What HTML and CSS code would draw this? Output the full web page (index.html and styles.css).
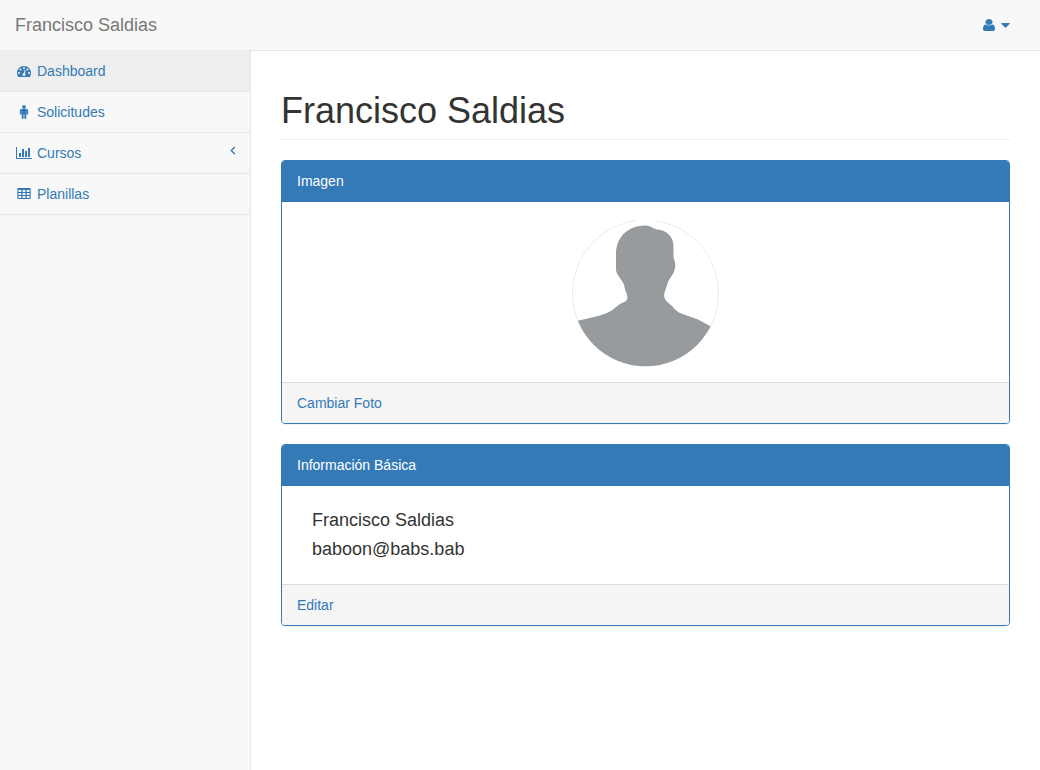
FILE: index.html
```html
<!DOCTYPE html>
<html lang="es">
<head>
<meta charset="utf-8">
<title>Francisco Saldias</title>
<link rel="stylesheet" href="styles.css">
</head>
<body>
<header class="navbar">
  <a class="brand">Francisco Saldias</a>
  <a class="user-menu">
    <svg class="user-icon" viewBox="256 128 1280 1536" preserveAspectRatio="none"><path d="M1536 1399q0 109-62.5 187t-150.5 78h-854q-88 0-150.5-78t-62.5-187q0-85 8.5-160.5t31.5-152 58.5-131 94-89 134.5-34.5q131 128 313 128t313-128q76 0 134.5 34.5t94 89 58.5 131 31.5 152 8.5 160.5zm-256-887q0 159-112.5 271.5t-271.5 112.5-271.5-112.5-112.5-271.5 112.5-271.5 271.5-112.5 271.5 112.5 112.5 271.5z"/></svg>
    <svg class="caret" viewBox="0 0 9 5"><path d="M.8 0h7.400q.8 0 .5.700L5 4.500q-.5.500-1 0L.3.700Q0 0 .8 0z"/></svg>
  </a>
</header>
<div class="layout">
  <nav class="sidebar">
    <a class="item active">
      <svg class="icon" viewBox="-128 0 2048 1792"><path d="M384 1152q0-53-37.5-90.5t-90.5-37.5-90.5 37.5-37.5 90.5 37.5 90.5 90.5 37.5 90.5-37.5 37.5-90.5zm192-448q0-53-37.5-90.5t-90.5-37.5-90.5 37.5-37.5 90.5 37.5 90.5 90.5 37.5 90.5-37.5 37.5-90.5zm428 481l101-382q6-26-7.5-48.5t-38.5-29.5-48 6.5-30 39.5l-101 382q-60 5-107 43.5t-63 98.5q-20 77 20 146t117 89 146-20 89-117q16-60-6-117t-72-91zm660-33q0-53-37.5-90.5t-90.5-37.5-90.5 37.5-37.5 90.5 37.5 90.5 90.5 37.5 90.5-37.5 37.5-90.5zm-640-640q0-53-37.5-90.5t-90.5-37.5-90.5 37.5-37.5 90.5 37.5 90.5 90.5 37.5 90.5-37.5 37.5-90.5zm448 192q0-53-37.5-90.5t-90.5-37.5-90.5 37.5-37.5 90.5 37.5 90.5 90.5 37.5 90.5-37.5 37.5-90.5zm320 448q0 261-141 483-19 29-54 29h-1402q-35 0-54-29-141-221-141-483 0-182 71-348t191-286 286-191 348-71 348 71 286 191 191 286 71 348z"/></svg>
      <span>Dashboard</span>
    </a>
    <a class="item">
      <svg class="icon" viewBox="0 0 16 14"><circle cx="8" cy="1.900" r="1.900"/><path d="M5.500 4h5Q12.200 4 12.200 5.700V8.700a.85.85 0 0 1-1.700 0V6h-.2v7.100a.9.9 0 0 1-1.900 0V9.500h-.8v3.600a.9.9 0 0 1-1.900 0V6H5.500v2.700a.85.85 0 0 1-1.700 0V5.700Q3.800 4 5.500 4z"/></svg>
      <span>Solicitudes</span>
    </a>
    <a class="item">
      <svg class="icon" viewBox="0 0 2048 1792"><path d="M640 896v512h-256v-512h256zm384-512v1024h-256v-1024h256zm1024 1152v128h-2048v-1536h128v1408h1920zm-640-896v768h-256v-768h256zm384-384v1152h-256v-1152h256z"/></svg>
      <span>Cursos</span>
      <svg class="arrow" viewBox="0 0 6 9"><path d="M4.800 .9L1.300 4.400l3.500 3.500"/></svg>
    </a>
    <a class="item">
      <svg class="icon" viewBox="0 0 16 14"><path fill-rule="evenodd" d="M2.300 1h11.400Q14.700 1 14.700 2v9Q14.700 12 13.700 12H2.300Q1.300 12 1.300 11V2Q1.300 1 2.300 1zM2.500 3v2h2.700V3zM6.500 3v2h3V3zM10.800 3v2h2.700V3zM2.500 6v2h2.700V6zM6.500 6v2h3V6zM10.800 6v2h2.700V6zM2.500 9v2h2.700V9zM6.500 9v2h3V9zM10.800 9v2h2.700V9z"/></svg>
      <span>Planillas</span>
    </a>
  </nav>
  <main class="content">
    <h1 class="page-header">Francisco Saldias</h1>
    <section class="panel">
      <div class="panel-heading">Imagen</div>
      <div class="panel-body photo">
        <svg class="avatar" viewBox="0 0 147 147">
          <defs><clipPath id="round"><circle cx="73.500" cy="73.300" r="73"/></clipPath></defs>
          <path class="rim" d="M64 .7A73 73 0 1 0 83 .7"/>
          <path class="person" clip-path="url(#round)" d="M0 102L6 100.800C17 97.500 29 96.300 38 91.500C44 88 45 85 51 82.500C56 81 56 77 54.500 73C52 68 53 65 50 61C46 55 44 53 44 49V34C44 18 55 5.700 73 5.500C80 5.600 80 8.500 85 9.500C95 10 101 17 101.500 25V38C105 45 103 51 99 57C95 62 95 67 93 71C91 77 93 80 96 82.500C101 86 103 91 109 93.500L126 99.500L140 107L147 112V147H0z"/>
        </svg>
      </div>
      <div class="panel-footer"><a>Cambiar Foto</a></div>
    </section>
    <section class="panel">
      <div class="panel-heading">Información Básica</div>
      <div class="panel-body info">
        <p>Francisco Saldias</p>
        <p>baboon@babs.bab</p>
      </div>
      <div class="panel-footer"><a>Editar</a></div>
    </section>
  </main>
</div>
</body>
</html>
```
FILE: styles.css
```css
* { box-sizing: border-box; }
body {
  margin: 0;
  height: 770px;
  display: flex;
  flex-direction: column;
  background: #f8f8f8;
  color: #333;
  font: 14px/20px "Liberation Sans", Arial, sans-serif;
}
a { color: #337ab7; }
svg { display: block; fill: #337ab7; }
.navbar {
  height: 51px;
  flex: none;
  display: flex;
  justify-content: space-between;
  align-items: center;
  padding: 0 30px 0 15px;
  border-bottom: 1px solid #e7e7e7;
}
.brand { color: #777; font-size: 18px; }
.user-menu { display: flex; align-items: center; gap: 6px; }
.user-icon { width: 12px; height: 12px; }
.caret { width: 9px; height: 5px; }
.layout { flex: 1; display: flex; }
.sidebar { width: 250px; flex: none; }
.item {
  height: 41px;
  display: flex;
  align-items: center;
  gap: 5px;
  padding: 0 15px 0 16px;
  border-bottom: 1px solid #e7e7e7;
}
.item.active { background: #eee; }
.icon { width: 16px; height: 14px; }
.arrow {
  width: 6px;
  height: 9px;
  margin: 0 -1px 5px auto;
  fill: none;
  stroke: #337ab7;
  stroke-width: 1.4;
}
.content {
  flex: 1;
  padding: 40px 30px 0;
  background: #fff;
  border-left: 1px solid #e7e7e7;
}
.page-header {
  margin: 0 0 20px;
  padding-bottom: 9px;
  border-bottom: 1px solid #eee;
  font-size: 36px;
  font-weight: 500;
  line-height: 39.6px;
  height: 49px;
}
.panel {
  margin-bottom: 20px;
  border: 1px solid #337ab7;
  border-radius: 4px;
  overflow: hidden;
  box-shadow: 0 1px 1px rgba(0, 0, 0, .05);
}
.panel-heading {
  height: 41px;
  padding: 10px 15px;
  background: #337ab7;
  color: #fff;
}
.photo { height: 180px; display: flex; justify-content: center; padding-top: 18px; }
.avatar { width: 147px; height: 147px; }
.rim { fill: none; stroke: #ebebeb; }
.person { fill: #989b9e; }
.info { height: 98px; padding: 20px 30px; }
.info p { margin: 0; font-size: 18px; line-height: 29px; }
.panel-footer {
  height: 41px;
  padding: 10px 15px;
  background: #f5f5f5;
  border-top: 1px solid #ddd;
}
```
